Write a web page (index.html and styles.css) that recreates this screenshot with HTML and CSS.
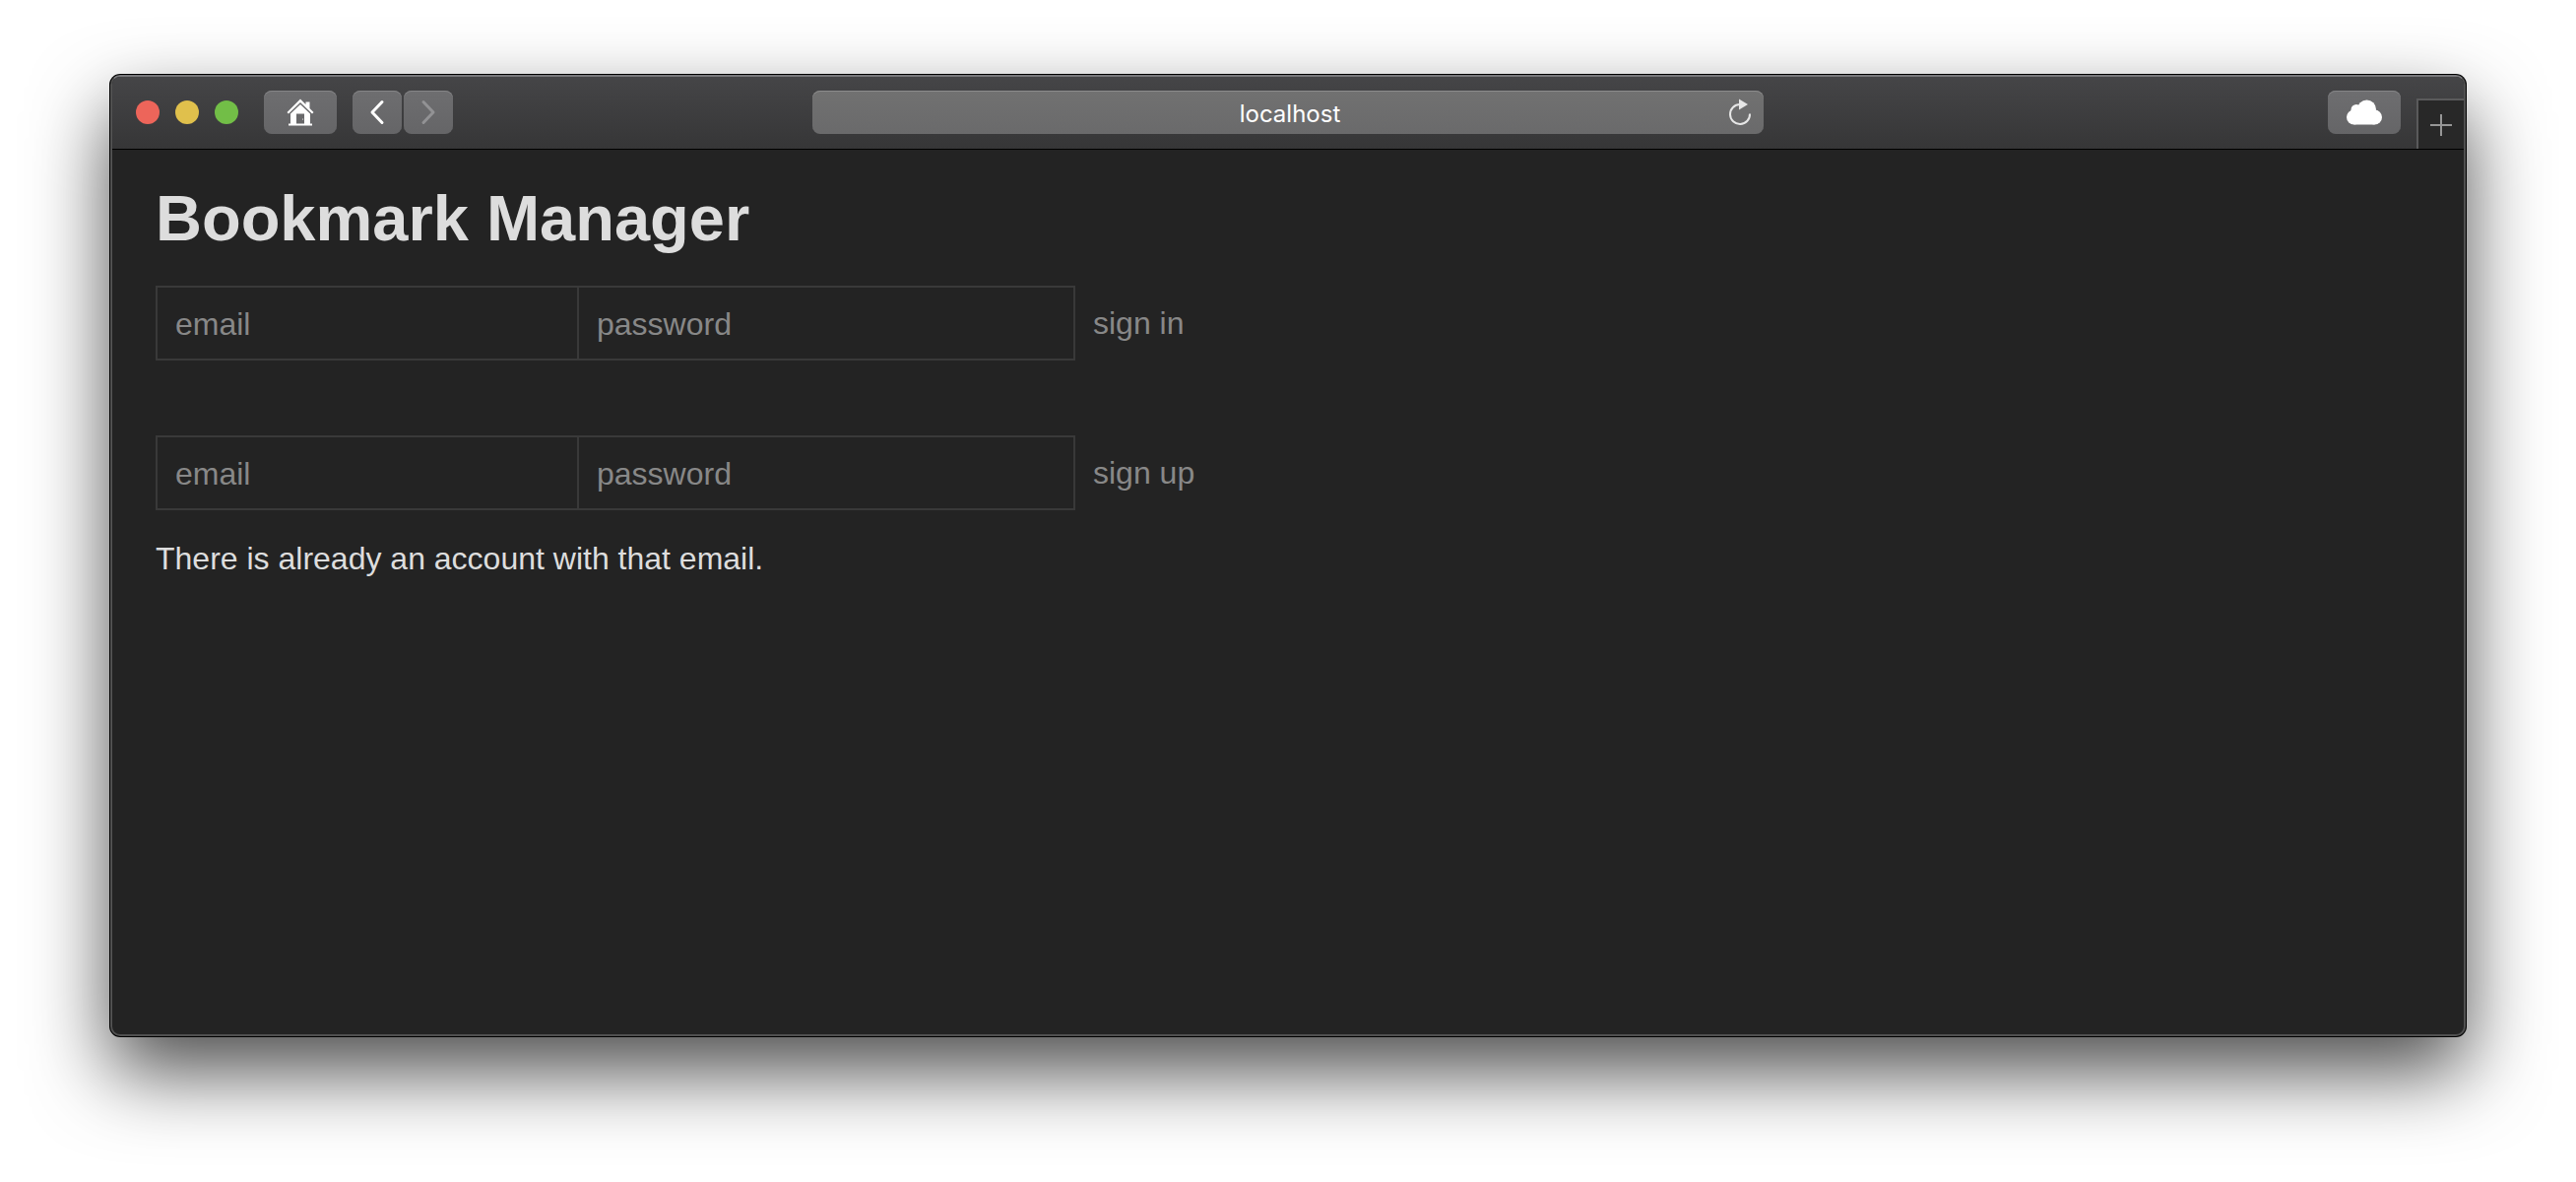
FILE: index.html
```html
<!DOCTYPE html>
<html lang="en">
<head>
  <meta charset="utf-8">
  <title>Bookmark Manager</title>
  <link rel="stylesheet" href="styles.css">
</head>
<body>
  <div class="window">
    <header class="toolbar">
      <div class="group">
        <div class="lights">
          <button class="light light-close" aria-label="Close"></button>
          <button class="light light-minimize" aria-label="Minimize"></button>
          <button class="light light-zoom" aria-label="Zoom"></button>
        </div>
        <button class="tool tool-wide" aria-label="Home">
          <svg width="28" height="28" viewBox="0 0 28 28" fill="#fff">
            <path d="M14 0.500 L19.500 6 V3.500 H23.500 V10 L27.500 14 L26 15.500 L14 4 L2 15.500 L0.500 14 Z"/>
            <path fill-rule="evenodd" d="M14 6 L24 15.500 V25.500 H26 V27.500 H2 V25.500 H4 V15.500 Z M10 15.500 V25.500 H18 V15.500 Z"/>
            <circle cx="16.500" cy="21" r="0.600"/>
          </svg>
        </button>
        <div class="pair">
          <button class="tool" aria-label="Back">
            <svg width="16" height="26" viewBox="0 0 16 26" fill="none" stroke="#fff" stroke-width="3" stroke-linecap="round" stroke-linejoin="round"><path d="M13 2.500 L3 13 L13 23.500"/></svg>
          </button>
          <button class="tool" aria-label="Forward" disabled>
            <svg width="16" height="26" viewBox="0 0 16 26" fill="none" stroke="#929294" stroke-width="3" stroke-linecap="round" stroke-linejoin="round"><path d="M3 2.500 L13 13 L3 23.500"/></svg>
          </button>
        </div>
      </div>
      <div class="address">
        <input class="address-field" type="text" value="localhost" aria-label="Address">
        <button class="reload" aria-label="Reload">
          <svg width="24" height="28" viewBox="0 0 24 28"><path d="M12 6 A10 10 0 1 0 22 15.500" fill="none" stroke="#e6e6e6" stroke-width="2"/><path d="M11 0.500 L20 6 L11 11.500 Z" fill="#e6e6e6"/></svg>
        </button>
      </div>
      <div class="group group-end">
        <button class="tool tool-wide" aria-label="iCloud tabs">
          <svg width="36" height="26" viewBox="0 0 36 26" fill="#fff">
            <circle cx="7.500" cy="18" r="7.500"/>
            <circle cx="10" cy="10.500" r="5.500"/>
            <circle cx="20.500" cy="10" r="9.500"/>
            <circle cx="28.500" cy="18" r="7.500"/>
            <path d="M7.500 10 H28.500 V25.500 H7.500 Z"/>
          </svg>
        </button>
        <button class="new-tab" aria-label="New tab">
          <svg width="22" height="22" viewBox="0 0 22 22" stroke="#969696" stroke-width="2"><path d="M11 0 V22 M0 11 H22"/></svg>
        </button>
      </div>
    </header>
    <main class="page">
      <h1 class="title">Bookmark Manager</h1>
      <form class="account">
        <input class="field field-email" type="email" placeholder="email" aria-label="email">
        <input class="field field-password" type="password" placeholder="password" aria-label="password">
        <button class="submit" type="submit">sign in</button>
      </form>
      <form class="account">
        <input class="field field-email" type="email" placeholder="email" aria-label="email">
        <input class="field field-password" type="password" placeholder="password" aria-label="password">
        <button class="submit" type="submit">sign up</button>
      </form>
      <p class="message">There is already an account with that email.</p>
    </main>
  </div>
</body>
</html>
```
FILE: styles.css
```css
* {
  box-sizing: border-box;
}

body {
  margin: 0;
  min-height: 100vh;
  padding: 76px 112px 148px;
  display: flex;
  background: #fff;
  color: #ddd;
  font-family: "Liberation Sans", Arial, sans-serif;
  font-size: 32px;
}

button,
input {
  margin: 0;
  padding: 0;
  border: 0;
  background: none;
  color: inherit;
  font: inherit;
}

svg {
  display: block;
}

.window {
  flex: 1;
  min-width: 0;
  display: flex;
  flex-direction: column;
  overflow: hidden;
  border: 2px solid #505050;
  border-top-color: #77777a;
  border-radius: 10px;
  background: #232323;
  box-shadow: 0 0 0 1px #000, 0 36px 80px rgba(0, 0, 0, 0.7);
}

.toolbar {
  display: grid;
  grid-template-columns: 1fr minmax(240px, 966px) 1fr;
  align-items: end;
  border-bottom: 1px solid #000;
  background: linear-gradient(#454547, #363637);
}

.group {
  display: flex;
  align-items: center;
  gap: 16px;
  padding: 14px 24px 15px;
}

.group-end {
  justify-content: flex-end;
  align-items: flex-end;
  padding: 0;
}

.group-end .tool {
  margin-bottom: 15px;
}

.lights {
  display: flex;
  gap: 16px;
  margin-right: 10px;
}

.light {
  width: 24px;
  height: 24px;
  border-radius: 50%;
}

.light-close {
  background: #ed655a;
}

.light-minimize {
  background: #e0c04c;
}

.light-zoom {
  background: #72be47;
}

.pair {
  display: flex;
  gap: 2px;
}

.tool {
  display: flex;
  align-items: center;
  justify-content: center;
  width: 50px;
  height: 44px;
  border-radius: 8px;
  background: linear-gradient(#6e6e70, #656567);
  box-shadow: inset 0 1px #858587;
}

.tool-wide {
  width: 74px;
}

.address {
  display: flex;
  align-items: center;
  height: 44px;
  margin-bottom: 15px;
  padding: 0 12px 0 40px;
  border-radius: 8px;
  background: linear-gradient(#717171, #6a6a6b);
  box-shadow: inset 0 1px #8c8c8c;
}

.address-field {
  flex: 1;
  min-width: 0;
  height: 44px;
  padding-top: 2px;
  color: #fff;
  font-family: Inter, sans-serif;
  font-size: 24px;
  text-align: center;
}

.new-tab {
  display: flex;
  align-items: center;
  justify-content: center;
  width: 48px;
  height: 51px;
  border-top: 2px solid #5a5a5b;
  border-left: 2px solid #5a5a5b;
  background: #282828;
}

.page {
  padding: 34px 44px;
}

.title {
  margin: 0 0 32px;
  font-size: 65px;
  line-height: 72px;
}

.account {
  display: flex;
  margin-bottom: 76px;
}

.account:last-of-type {
  margin-bottom: 30px;
}

.field {
  height: 76px;
  padding: 2px 18px 0;
  border: 2px solid #393939;
}

.field::placeholder {
  color: #888;
  opacity: 1;
}

.field-email {
  width: 428px;
  border-right: 0;
}

.field-password {
  width: 506px;
}

.submit {
  padding: 0 18px;
  color: #888;
}

.message {
  margin: 0;
  line-height: 38px;
}
```
